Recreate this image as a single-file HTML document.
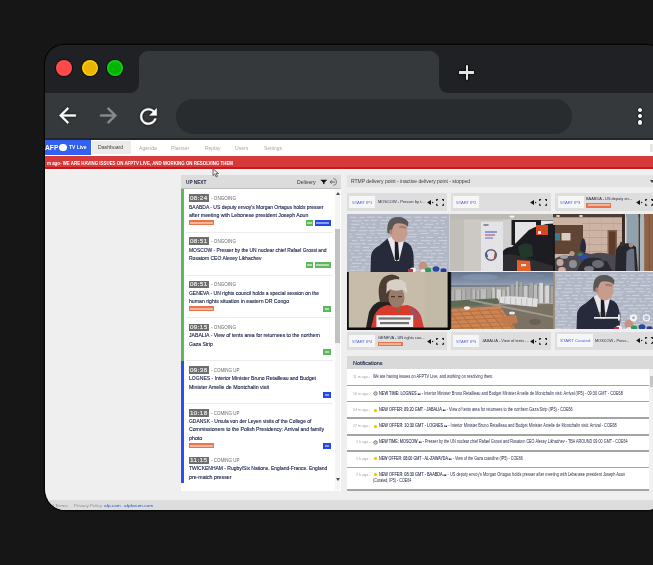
<!DOCTYPE html>
<html><head><meta charset="utf-8">
<style>
*{box-sizing:border-box;margin:0;padding:0}
html,body{width:653px;height:565px;overflow:hidden;background:#161616;font-family:"Liberation Sans",sans-serif}
.a{position:absolute}
#frame{left:45px;top:45px;width:621px;height:465px;border-radius:19px 19px 19px 20.5px;background:#202124;overflow:hidden;box-shadow:0 0 0 1.2px #060606}
.dot{width:16px;height:16px;border-radius:50%;box-shadow:0 0 0 1.2px #10131a}
#tab{left:93.5px;top:6px;width:300.5px;height:50px;background:#35393b;border-radius:9px 9px 0 0}
.inv{width:9px;height:9px;top:39px;background:#35393b}
.inv i{position:absolute;left:0;top:0;width:9px;height:9px;background:#202124}
#toolbar{left:0;top:48px;width:660px;height:47px;background:#35393b;border-bottom:2px solid #232628}
#omni{left:130.6px;top:54px;width:396.5px;height:34.5px;border-radius:17.25px;background:#292c2e}
#page{left:0;top:94.5px;width:660px;height:371px;background:#efefef;overflow:hidden}
.t{position:absolute;white-space:nowrap;line-height:1}
</style></head><body>
<div id="frame" class="a">
  <div class="a dot" style="left:10.8px;top:15px;background:radial-gradient(circle closest-side,#ff4848 70%,#ff5050 100%)"></div>
  <div class="a dot" style="left:36.5px;top:15px;background:radial-gradient(circle closest-side,#e8b600 68%,#ffd000 92%)"></div>
  <div class="a dot" style="left:61.5px;top:15px;background:radial-gradient(circle closest-side,#00b600 68%,#14d414 92%)"></div>
  <div id="tab" class="a"></div>
  <div class="a inv" style="left:84.5px"><i style="border-bottom-right-radius:9px"></i></div>
  <div class="a inv" style="left:394px"><i style="border-bottom-left-radius:9px"></i></div>
  <div id="toolbar" class="a"></div>
  <!-- plus -->
  <div class="a" style="left:413.9px;top:26.3px;width:15.6px;height:2.3px;border-radius:1.2px;background:#e4e4e4;box-shadow:0 0 1.6px 0.6px #0a0a0a"></div>
  <div class="a" style="left:420.75px;top:19.7px;width:2.3px;height:15.1px;border-radius:1.2px;background:#e4e4e4;box-shadow:0 0 1.6px 0.6px #0a0a0a"></div>
  <div class="a" style="left:413.9px;top:26.3px;width:15.6px;height:2.3px;border-radius:1.2px;background:#e4e4e4"></div>
  <!-- back -->
  <svg class="a" style="left:10.4px;top:58.2px;filter:drop-shadow(0 0 0.9px #000)" width="25" height="25" viewBox="0 0 24 24"><path d="M20 11H7.83l5.59-5.59L12 4l-8 8 8 8 1.41-1.41L7.83 13H20v-2z" fill="#fff" stroke="#fff" stroke-width="0.35"/></svg>
  <svg class="a" style="left:50.8px;top:58.2px" width="25" height="25" viewBox="0 0 24 24"><path d="M12 4l-1.41 1.41L16.17 11H4v2h12.17l-5.58 5.59L12 20l8-8z" fill="#8a8c8e" stroke="#8a8c8e" stroke-width="0.35"/></svg>
  <svg class="a" style="left:91.3px;top:58.9px;filter:drop-shadow(0 0 0.9px #000)" width="24.9" height="24.9" viewBox="0 0 24 24"><path d="M17.65 6.35C16.2 4.9 14.21 4 12 4c-4.42 0-7.99 3.58-7.99 8s3.57 8 7.99 8c3.730 0 6.84-2.55 7.73-6h-2.08c-.82 2.33-3.04 4-5.65 4-3.31 0-6-2.69-6-6s2.69-6 6-6c1.66 0 3.140.69 4.22 1.78L13 11h7V4l-2.35 2.35z" fill="#fff" stroke="#fff" stroke-width="0.3"/></svg>
  <div id="omni" class="a"></div>
  <div class="a" style="left:592.5px;top:62.5px;width:4.6px;height:4.6px;border-radius:50%;background:#fff;box-shadow:0 0 1.2px 0.4px #000"></div>
  <div class="a" style="left:592.5px;top:68.8px;width:4.6px;height:4.6px;border-radius:50%;background:#fff;box-shadow:0 0 1.2px 0.4px #000"></div>
  <div class="a" style="left:592.5px;top:75.1px;width:4.6px;height:4.6px;border-radius:50%;background:#fff;box-shadow:0 0 1.2px 0.4px #000"></div>
  <div id="page" class="a"><div class="a" style="left:-45px;top:-139.5px;width:700px;height:520px"><div class="a" style="left:45px;top:139.5px;width:620px;height:16.1px;background:#fff;"></div><div class="a" style="left:45px;top:139.9px;width:45.7px;height:15.4px;background:#3260f0;"></div><div class="t" style="left:44.6px;top:144.5px;font-size:6.9px;color:#fff;font-weight:bold;--w:13.4;transform:scaleX(0.971);transform-origin:0 0;">AFP</div><div class="a" style="left:59.2px;top:143.6px;width:7.7px;height:7.7px;background:#fff;border-radius:50%"></div><div class="t" style="left:69.3px;top:145.2px;font-size:5.8px;color:#fff;font-weight:bold;--w:17.6;transform:scaleX(0.853);transform-origin:0 0;">TV Live</div><div class="a" style="left:91.5px;top:141.4px;width:39.8px;height:12.6px;background:#ebebeb;"></div><div class="t" style="left:98.4px;top:145.4px;font-size:5.6px;color:#3c3c3c;--w:25.2;transform:scaleX(0.921);transform-origin:0 0;">Dashboard</div><div class="t" style="left:138.6px;top:145.6px;font-size:5.2px;color:#a8a8a8;--w:17.9;transform:scaleX(1.001);transform-origin:0 0;">Agenda</div><div class="t" style="left:171px;top:145.6px;font-size:5.2px;color:#a8a8a8;--w:18.3;transform:scaleX(1.023);transform-origin:0 0;">Planner</div><div class="t" style="left:204.8px;top:145.6px;font-size:5.2px;color:#a8a8a8;--w:15.4;transform:scaleX(0.953);transform-origin:0 0;">Replay</div><div class="t" style="left:234.9px;top:145.6px;font-size:5.2px;color:#a8a8a8;--w:13.2;transform:scaleX(0.974);transform-origin:0 0;">Users</div><div class="t" style="left:263.6px;top:145.6px;font-size:5.2px;color:#a8a8a8;--w:17.9;transform:scaleX(0.955);transform-origin:0 0;">Settings</div><div class="a" style="left:650px;top:144px;width:4px;height:8px;background:#e6e6e6;"></div><div class="a" style="left:45px;top:155.6px;width:620px;height:13.6px;background:#d63a3a;border-bottom:2.3px solid #cf1616"></div><div class="a" style="left:45px;top:169.2px;width:620px;height:2.3px;background:#f8f8f8;"></div><div class="t" style="left:47px;top:160.8px;font-size:5.2px;color:#fff;font-weight:bold;--w:186;transform:scaleX(0.849);transform-origin:0 0;">m ago- WE ARE HAVING ISSUES ON AFPTV LIVE, AND WORKING ON RESOLVING THEM</div><div class="a" style="left:45px;top:499.5px;width:620px;height:11px;background:#dcdcdc;"></div><div class="t" style="left:51px;top:504.4px;font-size:4.4px;color:#8f8f8f;--w:17;transform:scaleX(1.093);transform-origin:0 0;">d Terms</div><div class="t" style="left:73.7px;top:504.4px;font-size:4.4px;color:#8f8f8f;--w:27.9;transform:scaleX(1.021);transform-origin:0 0;">Privacy Policy</div><div class="t" style="left:104.2px;top:504.4px;font-size:4.4px;color:#2a52d8;--w:16.8;transform:scaleX(1.075);transform-origin:0 0;">afp.com</div><div class="t" style="left:123.75px;top:504.4px;font-size:4.4px;color:#2a52d8;--w:29.2;transform:scaleX(1.088);transform-origin:0 0;">afpforum.com</div><div class="a" style="left:180.7px;top:175px;width:160px;height:14.3px;background:#dcdcdc;border-bottom:1.5px solid #bdbdbd"></div><div class="t" style="left:185.8px;top:179.9px;font-size:5.2px;color:#232a44;font-weight:bold;--w:20.3;transform:scaleX(0.907);transform-origin:0 0;">UP NEXT</div><div class="t" style="left:297px;top:180.6px;font-size:4.8px;color:#333;--w:18.5;transform:scaleX(1.068);transform-origin:0 0;">Delivery</div><svg class="a" style="left:319.5px;top:178.5px" width="8" height="6" viewBox="0 0 8 6"><path d="M0.3 0.7h7L4.5 3.6V5.3L3.1 4.8V3.6z" fill="#111"/></svg><svg class="a" style="left:328.5px;top:177.5px" width="9" height="8" viewBox="0 0 9 8"><path d="M4.2 0.6A3.4 3.4 0 1 1 4.2 7.4" stroke="#6a6a6a" stroke-width="0.8" fill="none"/><path d="M6.2 4H1.2M2.8 2.4L1.2 4 2.8 5.6" stroke="#444" stroke-width="0.8" fill="none"/></svg><div class="a" style="left:180.7px;top:189.3px;width:160px;height:301.8px;background:#fff;"></div><div class="a" style="left:334.9px;top:189.3px;width:5.3px;height:300.7px;background:#f5f5f5;"></div><div class="a" style="left:335.3px;top:229px;width:4.5px;height:114px;background:#c1c1c1;"></div><svg class="a" style="left:335.5px;top:191.5px" width="4" height="3" viewBox="0 0 4 3"><path d="M0 3L2 0 4 3z" fill="#505050"/></svg><svg class="a" style="left:335.5px;top:478px" width="4" height="3" viewBox="0 0 4 3"><path d="M0 0L2 3 4 0z" fill="#505050"/></svg><div class="a" style="left:180.8px;top:189.3px;width:3.7px;height:171.4px;background:#5cb85c;"></div><div class="a" style="left:180.8px;top:360.7px;width:3.7px;height:122px;background:#2a4ef2;"></div><div class="a" style="left:186px;top:231.5px;width:147px;height:1px;background:#ececec;"></div><div class="a" style="left:186px;top:274.7px;width:147px;height:1px;background:#ececec;"></div><div class="a" style="left:186px;top:317.1px;width:147px;height:1px;background:#ececec;"></div><div class="a" style="left:186px;top:360.1px;width:147px;height:1px;background:#ececec;"></div><div class="a" style="left:186px;top:402.5px;width:147px;height:1px;background:#ececec;"></div><div class="a" style="left:188.5px;top:194.1px;width:20.6px;height:7.9px;background:#6e6e6e;"></div><div class="t" style="left:190px;top:195.7px;font-size:5.6px;color:#ececec;--w:17.5;transform:scaleX(1.129);transform-origin:0 0;letter-spacing:0.3px;-webkit-text-stroke:0.15px #ececec">08:24</div><div class="t" style="left:210.5px;top:196.0px;font-size:5.2px;color:#666;--w:25;transform:scaleX(0.885);transform-origin:0 0;">- ONGOING</div><div class="t" style="left:188.5px;top:204.7px;font-size:5.0px;color:#18204a;--w:134.4;transform:scaleX(0.996);transform-origin:0 0;-webkit-text-stroke:0.12px #18204a">BAABDA - US deputy envoy's Morgan Ortagus holds presser</div><div class="t" style="left:188.5px;top:212.7px;font-size:5.0px;color:#18204a;--w:119.3;transform:scaleX(1.037);transform-origin:0 0;-webkit-text-stroke:0.12px #18204a">after meeting with Lebonese president Joseph Aoun</div><div class="a" style="left:188.5px;top:220.4px;width:25.5px;height:5px;background:#e8744c;"></div><div class="a" style="left:190px;top:221.9px;width:22.5px;height:2px;background:#f4b59a;"></div><div class="a" style="left:314.7px;top:220.2px;width:16px;height:5.4px;background:#2448e6;"></div><div class="a" style="left:316.2px;top:221.8px;width:13px;height:2.2px;background:#8da0f4;"></div><div class="a" style="left:305.59999999999997px;top:220.2px;width:7.5px;height:5.4px;background:#5cb85c;"></div><div class="a" style="left:307.09999999999997px;top:221.8px;width:4.5px;height:2.2px;background:#b5dcb5;"></div><div class="a" style="left:188.5px;top:237.4px;width:20.6px;height:7.9px;background:#6e6e6e;"></div><div class="t" style="left:190px;top:239.0px;font-size:5.6px;color:#ececec;--w:17.5;transform:scaleX(1.129);transform-origin:0 0;letter-spacing:0.3px;-webkit-text-stroke:0.15px #ececec">08:51</div><div class="t" style="left:210.5px;top:239.3px;font-size:5.2px;color:#666;--w:25;transform:scaleX(0.885);transform-origin:0 0;">- ONGOING</div><div class="t" style="left:188.5px;top:247.7px;font-size:5.0px;color:#18204a;--w:137.5;transform:scaleX(0.982);transform-origin:0 0;-webkit-text-stroke:0.12px #18204a">MOSCOW - Presser by the UN nuclear chief Rafael Grossi and</div><div class="t" style="left:188.5px;top:255.7px;font-size:5.0px;color:#18204a;--w:72.5;transform:scaleX(1.003);transform-origin:0 0;-webkit-text-stroke:0.12px #18204a">Rosatom CEO Alexey Likhachev</div><div class="a" style="left:314.7px;top:262.2px;width:16px;height:5.4px;background:#5cb85c;"></div><div class="a" style="left:316.2px;top:263.8px;width:13px;height:2.2px;background:#b5dcb5;"></div><div class="a" style="left:305.59999999999997px;top:262.2px;width:7.5px;height:5.4px;background:#5cb85c;"></div><div class="a" style="left:307.09999999999997px;top:263.8px;width:4.5px;height:2.2px;background:#b5dcb5;"></div><div class="a" style="left:188.5px;top:280.5px;width:20.6px;height:7.9px;background:#6e6e6e;"></div><div class="t" style="left:190px;top:282.1px;font-size:5.6px;color:#ececec;--w:17.5;transform:scaleX(1.129);transform-origin:0 0;letter-spacing:0.3px;-webkit-text-stroke:0.15px #ececec">08:51</div><div class="t" style="left:210.5px;top:282.4px;font-size:5.2px;color:#666;--w:25;transform:scaleX(0.885);transform-origin:0 0;">- ONGOING</div><div class="t" style="left:188.5px;top:290.7px;font-size:5.0px;color:#18204a;--w:130;transform:scaleX(0.996);transform-origin:0 0;-webkit-text-stroke:0.12px #18204a">GENEVA - UN rights council holds a special session on the</div><div class="t" style="left:188.5px;top:298.7px;font-size:5.0px;color:#18204a;--w:100;transform:scaleX(1.031);transform-origin:0 0;-webkit-text-stroke:0.12px #18204a">human rights situation in eastern DR Congo</div><div class="a" style="left:188.5px;top:306.4px;width:25.5px;height:5px;background:#e8744c;"></div><div class="a" style="left:190px;top:307.9px;width:22.5px;height:2px;background:#f4b59a;"></div><div class="a" style="left:323.2px;top:306.2px;width:7.5px;height:5.4px;background:#5cb85c;"></div><div class="a" style="left:324.7px;top:307.8px;width:4.5px;height:2.2px;background:#b5dcb5;"></div><div class="a" style="left:188.5px;top:323.5px;width:20.6px;height:7.9px;background:#6e6e6e;"></div><div class="t" style="left:190px;top:325.1px;font-size:5.6px;color:#ececec;--w:17.5;transform:scaleX(1.129);transform-origin:0 0;letter-spacing:0.3px;-webkit-text-stroke:0.15px #ececec">09:15</div><div class="t" style="left:210.5px;top:325.4px;font-size:5.2px;color:#666;--w:25;transform:scaleX(0.885);transform-origin:0 0;">- ONGOING</div><div class="t" style="left:188.5px;top:333.2px;font-size:5.0px;color:#18204a;--w:131;transform:scaleX(1.025);transform-origin:0 0;-webkit-text-stroke:0.12px #18204a">JABALIA - View of tents area for returnees to the northern</div><div class="t" style="left:188.5px;top:341.7px;font-size:5.0px;color:#18204a;--w:23.7;transform:scaleX(1.003);transform-origin:0 0;-webkit-text-stroke:0.12px #18204a">Gaza Strip</div><div class="a" style="left:323.2px;top:349.2px;width:7.5px;height:5.4px;background:#5cb85c;"></div><div class="a" style="left:324.7px;top:350.8px;width:4.5px;height:2.2px;background:#b5dcb5;"></div><div class="a" style="left:188.5px;top:366.2px;width:20.6px;height:7.9px;background:#6e6e6e;"></div><div class="t" style="left:190px;top:367.8px;font-size:5.6px;color:#ececec;--w:17.5;transform:scaleX(1.129);transform-origin:0 0;letter-spacing:0.3px;-webkit-text-stroke:0.15px #ececec">09:38</div><div class="t" style="left:210.5px;top:368.09999999999997px;font-size:5.2px;color:#666;--w:28.5;transform:scaleX(0.860);transform-origin:0 0;">- COMING UP</div><div class="t" style="left:188.5px;top:376.4px;font-size:5.0px;color:#18204a;--w:127;transform:scaleX(1.015);transform-origin:0 0;-webkit-text-stroke:0.12px #18204a">LOGNES - Interior Minister Bruno Retailleau and Budget</div><div class="t" style="left:188.5px;top:384.7px;font-size:5.0px;color:#18204a;--w:80;transform:scaleX(1.047);transform-origin:0 0;-webkit-text-stroke:0.12px #18204a">Minister Amelie de Montchalin visit</div><div class="a" style="left:323.2px;top:392.2px;width:7.5px;height:5.4px;background:#2448e6;"></div><div class="a" style="left:324.7px;top:393.8px;width:4.5px;height:2.2px;background:#8da0f4;"></div><div class="a" style="left:188.5px;top:409.2px;width:20.6px;height:7.9px;background:#6e6e6e;"></div><div class="t" style="left:190px;top:410.8px;font-size:5.6px;color:#ececec;--w:17.5;transform:scaleX(1.129);transform-origin:0 0;letter-spacing:0.3px;-webkit-text-stroke:0.15px #ececec">10:18</div><div class="t" style="left:210.5px;top:411.09999999999997px;font-size:5.2px;color:#666;--w:28.5;transform:scaleX(0.860);transform-origin:0 0;">- COMING UP</div><div class="t" style="left:188.5px;top:418.7px;font-size:5.0px;color:#18204a;--w:122.4;transform:scaleX(0.992);transform-origin:0 0;-webkit-text-stroke:0.12px #18204a">GDANSK - Ursula von der Leyen visits of the College of</div><div class="t" style="left:188.5px;top:427.2px;font-size:5.0px;color:#18204a;--w:135;transform:scaleX(1.036);transform-origin:0 0;-webkit-text-stroke:0.12px #18204a">Commissioners to the Polish Presidency: Arrival and family</div><div class="t" style="left:188.5px;top:435.5px;font-size:5.0px;color:#18204a;--w:13.3;transform:scaleX(1.063);transform-origin:0 0;-webkit-text-stroke:0.12px #18204a">photo</div><div class="a" style="left:188.5px;top:443.4px;width:25.5px;height:5px;background:#e8744c;"></div><div class="a" style="left:190px;top:444.9px;width:22.5px;height:2px;background:#f4b59a;"></div><div class="a" style="left:323.2px;top:443.2px;width:7.5px;height:5.4px;background:#2448e6;"></div><div class="a" style="left:324.7px;top:444.8px;width:4.5px;height:2.2px;background:#8da0f4;"></div><div class="a" style="left:188.5px;top:456.5px;width:20.6px;height:7.9px;background:#6e6e6e;"></div><div class="t" style="left:190px;top:458.1px;font-size:5.6px;color:#ececec;--w:17.5;transform:scaleX(1.159);transform-origin:0 0;letter-spacing:0.3px;-webkit-text-stroke:0.15px #ececec">11:15</div><div class="t" style="left:210.5px;top:458.4px;font-size:5.2px;color:#666;--w:28.5;transform:scaleX(0.860);transform-origin:0 0;">- COMING UP</div><div class="t" style="left:188.5px;top:466.3px;font-size:5.0px;color:#18204a;--w:138.3;transform:scaleX(0.993);transform-origin:0 0;-webkit-text-stroke:0.12px #18204a">TWICKENHAM - Rugby/Six Nations. England-France. England</div><div class="t" style="left:188.5px;top:474.7px;font-size:5.0px;color:#18204a;--w:42.4;transform:scaleX(1.045);transform-origin:0 0;-webkit-text-stroke:0.12px #18204a">pre-match presser</div><div class="a" style="left:346.8px;top:174.8px;width:320px;height:12.2px;background:#e3e3e3;"></div><div class="t" style="left:350.5px;top:180.0px;font-size:4.6px;color:#3a3a3a;--w:119;transform:scaleX(1.086);transform-origin:0 0;">RTMP delivery point - inactive delivery point - stopped</div><svg class="a" style="left:649.5px;top:180px" width="4" height="3" viewBox="0 0 4 3"><path d="M0 0L2 3 4 0z" fill="#444"/></svg><div class="a" style="left:346.8px;top:193.4px;width:100.5px;height:17.9px;background:#dedede;"></div><div class="a" style="left:349.3px;top:195.8px;width:26.2px;height:12.6px;background:#f6f6f6;"></div><div class="t" style="left:352.0px;top:200.70000000000002px;font-size:4.4px;color:#5064d8;--w:20.4;transform:scaleX(0.939);transform-origin:0 0;">START IP1</div><div class="t" style="left:377.8px;top:200.4px;font-size:4.4px;color:#262c48;--w:46.6;transform:scaleX(0.901);transform-origin:0 0;">MOSCOW - Presser by t...</div><svg class="a" style="left:426.8px;top:198.70000000000002px" width="18" height="8" viewBox="0 0 18 8"><path d="M0.1 3.4L4 0.9V5.9z" fill="#151515"/><circle cx="5.6" cy="3.4" r="0.75" fill="#222"/><path d="M9.6 1.9V0.6h1.5M15 0.6h1.5v1.3M9.6 4.8v1.4h1.5M15 6.2h1.5V4.8" stroke="#222" stroke-width="1.05" fill="none"/></svg><div class="a" style="left:450.7px;top:193.4px;width:99.90000000000003px;height:17.9px;background:#dedede;"></div><div class="a" style="left:453.2px;top:195.8px;width:26.2px;height:12.6px;background:#f6f6f6;"></div><div class="t" style="left:455.9px;top:200.70000000000002px;font-size:4.4px;color:#5064d8;--w:20.4;transform:scaleX(0.939);transform-origin:0 0;">START IP2</div><div class="t" style="left:481.7px;top:200.4px;font-size:4.4px;color:#262c48;--w:46.6;transform:scaleX(1.000);transform-origin:0 0;"></div><svg class="a" style="left:530.1px;top:198.70000000000002px" width="18" height="8" viewBox="0 0 18 8"><path d="M0.1 3.4L4 0.9V5.9z" fill="#151515"/><circle cx="5.6" cy="3.4" r="0.75" fill="#222"/><path d="M9.6 1.9V0.6h1.5M15 0.6h1.5v1.3M9.6 4.8v1.4h1.5M15 6.2h1.5V4.8" stroke="#222" stroke-width="1.05" fill="none"/></svg><div class="a" style="left:555px;top:193.4px;width:105px;height:17.9px;background:#dedede;"></div><div class="a" style="left:557.5px;top:195.8px;width:26.2px;height:12.6px;background:#f6f6f6;"></div><div class="t" style="left:560.2px;top:200.70000000000002px;font-size:4.4px;color:#5064d8;--w:20.4;transform:scaleX(0.939);transform-origin:0 0;">START IP3</div><div class="t" style="left:586.0px;top:197.0px;font-size:4.4px;color:#262c48;--w:46;transform:scaleX(0.889);transform-origin:0 0;">BAABDA - US deputy en...</div><div class="a" style="left:586.0px;top:203.0px;width:25px;height:4.6px;background:#e8744c;"></div><div class="a" style="left:587.5px;top:204.3px;width:22px;height:2px;background:#f3b39a;"></div><svg class="a" style="left:636px;top:198.70000000000002px" width="18" height="8" viewBox="0 0 18 8"><path d="M0.1 3.4L4 0.9V5.9z" fill="#151515"/><circle cx="5.6" cy="3.4" r="0.75" fill="#222"/><path d="M9.6 1.9V0.6h1.5M15 0.6h1.5v1.3M9.6 4.8v1.4h1.5M15 6.2h1.5V4.8" stroke="#222" stroke-width="1.05" fill="none"/></svg><div class="a" style="left:346.8px;top:332.3px;width:100.5px;height:17.9px;background:#dedede;"></div><div class="a" style="left:349.3px;top:334.7px;width:26.2px;height:12.6px;background:#f6f6f6;"></div><div class="t" style="left:352.0px;top:339.6px;font-size:4.4px;color:#5064d8;--w:20.4;transform:scaleX(0.939);transform-origin:0 0;">START IP4</div><div class="t" style="left:377.8px;top:335.90000000000003px;font-size:4.4px;color:#262c48;--w:46.6;transform:scaleX(0.898);transform-origin:0 0;">GENEVA - UN rights cou...</div><div class="a" style="left:377.8px;top:341.90000000000003px;width:25px;height:4.6px;background:#e8744c;"></div><div class="a" style="left:379.3px;top:343.2px;width:22px;height:2px;background:#f3b39a;"></div><svg class="a" style="left:426.8px;top:337.6px" width="18" height="8" viewBox="0 0 18 8"><path d="M0.1 3.4L4 0.9V5.9z" fill="#151515"/><circle cx="5.6" cy="3.4" r="0.75" fill="#222"/><path d="M9.6 1.9V0.6h1.5M15 0.6h1.5v1.3M9.6 4.8v1.4h1.5M15 6.2h1.5V4.8" stroke="#222" stroke-width="1.05" fill="none"/></svg><div class="a" style="left:450.7px;top:332.3px;width:99.90000000000003px;height:17.9px;background:#dedede;"></div><div class="a" style="left:453.2px;top:334.7px;width:26.2px;height:12.6px;background:#f6f6f6;"></div><div class="t" style="left:455.9px;top:339.6px;font-size:4.4px;color:#5064d8;--w:20.4;transform:scaleX(0.939);transform-origin:0 0;">START IP5</div><div class="t" style="left:481.7px;top:339.3px;font-size:4.4px;color:#262c48;--w:46.6;transform:scaleX(0.911);transform-origin:0 0;">JABALIA - View of tents ...</div><svg class="a" style="left:530.1px;top:337.6px" width="18" height="8" viewBox="0 0 18 8"><path d="M0.1 3.4L4 0.9V5.9z" fill="#151515"/><circle cx="5.6" cy="3.4" r="0.75" fill="#222"/><path d="M9.6 1.9V0.6h1.5M15 0.6h1.5v1.3M9.6 4.8v1.4h1.5M15 6.2h1.5V4.8" stroke="#222" stroke-width="1.05" fill="none"/></svg><div class="a" style="left:554.9px;top:332.0px;width:105.10000000000002px;height:17.9px;background:#dedede;"></div><div class="a" style="left:557.4px;top:334.4px;width:35.5px;height:12.6px;background:#f6f6f6;"></div><div class="t" style="left:560.1px;top:339.3px;font-size:4.4px;color:#5064d8;--w:30.3;transform:scaleX(0.985);transform-origin:0 0;">START Curated</div><div class="t" style="left:595.1999999999999px;top:339.0px;font-size:4.4px;color:#262c48;--w:34.4;transform:scaleX(0.870);transform-origin:0 0;">MOSCOW - Press...</div><svg class="a" style="left:636px;top:337.3px" width="18" height="8" viewBox="0 0 18 8"><path d="M0.1 3.4L4 0.9V5.9z" fill="#151515"/><circle cx="5.6" cy="3.4" r="0.75" fill="#222"/><path d="M9.6 1.9V0.6h1.5M15 0.6h1.5v1.3M9.6 4.8v1.4h1.5M15 6.2h1.5V4.8" stroke="#222" stroke-width="1.05" fill="none"/></svg><svg class="a" style="left:347px;top:213.6px" width="103" height="58" viewBox="0 0 103 58" preserveAspectRatio="none"><defs><filter id="b347213" x="-5%" y="-5%" width="110%" height="110%"><feGaussianBlur stdDeviation="0.4"/></filter></defs><g filter="url(#b347213)"><rect x="0" y="0" width="103" height="58" fill="#b1b7c6"/><rect x="3.1" y="2.8" width="6.3" height="1.1" fill="#dfe2ea" opacity="0.6"/><rect x="12.2" y="3.0" width="5.7" height="1.1" fill="#dfe2ea" opacity="0.6"/><rect x="20.2" y="2.5" width="7.7" height="1.1" fill="#dfe2ea" opacity="0.6"/><rect x="30.3" y="2.6" width="5.0" height="1.1" fill="#dfe2ea" opacity="0.6"/><rect x="39.1" y="3.1" width="4.8" height="1.1" fill="#dfe2ea" opacity="0.6"/><rect x="48.2" y="3.2" width="4.3" height="1.1" fill="#dfe2ea" opacity="0.6"/><rect x="56.4" y="2.5" width="8.0" height="1.1" fill="#dfe2ea" opacity="0.6"/><rect x="67.3" y="2.7" width="7.6" height="1.1" fill="#dfe2ea" opacity="0.6"/><rect x="77.1" y="2.7" width="4.8" height="1.1" fill="#dfe2ea" opacity="0.6"/><rect x="85.8" y="2.8" width="5.1" height="1.1" fill="#dfe2ea" opacity="0.6"/><rect x="94.3" y="2.7" width="5.7" height="1.1" fill="#dfe2ea" opacity="0.6"/><rect x="4.9" y="6.4" width="9.5" height="1.1" fill="#dfe2ea" opacity="0.6"/><rect x="17.5" y="5.9" width="4.1" height="1.1" fill="#dfe2ea" opacity="0.6"/><rect x="24.0" y="5.9" width="6.1" height="1.1" fill="#dfe2ea" opacity="0.6"/><rect x="33.8" y="5.8" width="8.6" height="1.1" fill="#dfe2ea" opacity="0.6"/><rect x="46.3" y="6.5" width="6.4" height="1.1" fill="#dfe2ea" opacity="0.6"/><rect x="55.7" y="6.2" width="9.2" height="1.1" fill="#dfe2ea" opacity="0.6"/><rect x="68.2" y="5.8" width="6.5" height="1.1" fill="#dfe2ea" opacity="0.6"/><rect x="76.6" y="6.1" width="4.1" height="1.1" fill="#dfe2ea" opacity="0.6"/><rect x="83.3" y="6.3" width="6.9" height="1.1" fill="#dfe2ea" opacity="0.6"/><rect x="92.9" y="6.2" width="4.9" height="1.1" fill="#dfe2ea" opacity="0.6"/><rect x="4.3" y="9.8" width="7.9" height="1.1" fill="#dfe2ea" opacity="0.6"/><rect x="14.4" y="9.2" width="2.9" height="1.1" fill="#dfe2ea" opacity="0.6"/><rect x="19.2" y="9.6" width="2.1" height="1.1" fill="#dfe2ea" opacity="0.6"/><rect x="25.5" y="9.6" width="3.0" height="1.1" fill="#dfe2ea" opacity="0.6"/><rect x="32.9" y="9.2" width="8.9" height="1.1" fill="#dfe2ea" opacity="0.6"/><rect x="45.2" y="9.2" width="4.3" height="1.1" fill="#dfe2ea" opacity="0.6"/><rect x="51.0" y="9.8" width="6.7" height="1.1" fill="#dfe2ea" opacity="0.6"/><rect x="59.6" y="9.4" width="3.3" height="1.1" fill="#dfe2ea" opacity="0.6"/><rect x="64.5" y="9.7" width="6.2" height="1.1" fill="#dfe2ea" opacity="0.6"/><rect x="73.6" y="9.1" width="2.4" height="1.1" fill="#dfe2ea" opacity="0.6"/><rect x="78.0" y="9.8" width="8.0" height="1.1" fill="#dfe2ea" opacity="0.6"/><rect x="89.0" y="9.3" width="2.9" height="1.1" fill="#dfe2ea" opacity="0.6"/><rect x="94.7" y="9.2" width="3.0" height="1.1" fill="#dfe2ea" opacity="0.6"/><rect x="4.5" y="13.1" width="4.1" height="1.1" fill="#dfe2ea" opacity="0.6"/><rect x="12.8" y="12.6" width="5.9" height="1.1" fill="#dfe2ea" opacity="0.6"/><rect x="20.7" y="13.1" width="8.0" height="1.1" fill="#dfe2ea" opacity="0.6"/><rect x="32.8" y="12.7" width="3.9" height="1.1" fill="#dfe2ea" opacity="0.6"/><rect x="38.3" y="12.6" width="4.7" height="1.1" fill="#dfe2ea" opacity="0.6"/><rect x="44.9" y="13.2" width="2.7" height="1.1" fill="#dfe2ea" opacity="0.6"/><rect x="50.0" y="12.8" width="6.5" height="1.1" fill="#dfe2ea" opacity="0.6"/><rect x="59.4" y="12.8" width="7.3" height="1.1" fill="#dfe2ea" opacity="0.6"/><rect x="69.7" y="12.9" width="2.7" height="1.1" fill="#dfe2ea" opacity="0.6"/><rect x="75.9" y="12.7" width="8.5" height="1.1" fill="#dfe2ea" opacity="0.6"/><rect x="87.3" y="13.0" width="9.3" height="1.1" fill="#dfe2ea" opacity="0.6"/><rect x="98.2" y="12.5" width="1.8" height="1.1" fill="#dfe2ea" opacity="0.6"/><rect x="3.2" y="15.9" width="5.5" height="1.1" fill="#dfe2ea" opacity="0.6"/><rect x="11.6" y="16.2" width="8.5" height="1.1" fill="#dfe2ea" opacity="0.6"/><rect x="22.2" y="16.2" width="5.6" height="1.1" fill="#dfe2ea" opacity="0.6"/><rect x="29.4" y="15.7" width="10.1" height="1.1" fill="#dfe2ea" opacity="0.6"/><rect x="42.9" y="16.5" width="3.3" height="1.1" fill="#dfe2ea" opacity="0.6"/><rect x="49.8" y="16.1" width="4.0" height="1.1" fill="#dfe2ea" opacity="0.6"/><rect x="57.9" y="16.2" width="9.7" height="1.1" fill="#dfe2ea" opacity="0.6"/><rect x="71.0" y="16.4" width="8.7" height="1.1" fill="#dfe2ea" opacity="0.6"/><rect x="82.7" y="16.3" width="7.5" height="1.1" fill="#dfe2ea" opacity="0.6"/><rect x="93.3" y="16.2" width="4.0" height="1.1" fill="#dfe2ea" opacity="0.6"/><rect x="99.8" y="16.3" width="0.2" height="1.1" fill="#dfe2ea" opacity="0.6"/><rect x="2.3" y="19.7" width="2.2" height="1.1" fill="#dfe2ea" opacity="0.6"/><rect x="8.2" y="19.7" width="11.0" height="1.1" fill="#dfe2ea" opacity="0.6"/><rect x="23.6" y="19.1" width="3.4" height="1.1" fill="#dfe2ea" opacity="0.6"/><rect x="30.3" y="19.1" width="8.8" height="1.1" fill="#dfe2ea" opacity="0.6"/><rect x="43.5" y="19.2" width="4.1" height="1.1" fill="#dfe2ea" opacity="0.6"/><rect x="50.3" y="19.1" width="3.6" height="1.1" fill="#dfe2ea" opacity="0.6"/><rect x="55.7" y="19.1" width="2.3" height="1.1" fill="#dfe2ea" opacity="0.6"/><rect x="61.5" y="19.6" width="9.0" height="1.1" fill="#dfe2ea" opacity="0.6"/><rect x="73.3" y="19.1" width="8.8" height="1.1" fill="#dfe2ea" opacity="0.6"/><rect x="86.2" y="19.1" width="5.7" height="1.1" fill="#dfe2ea" opacity="0.6"/><rect x="94.5" y="19.6" width="3.7" height="1.1" fill="#dfe2ea" opacity="0.6"/><rect x="2.1" y="22.4" width="3.7" height="1.1" fill="#dfe2ea" opacity="0.6"/><rect x="10.1" y="22.9" width="5.7" height="1.1" fill="#dfe2ea" opacity="0.6"/><rect x="19.1" y="22.9" width="5.7" height="1.1" fill="#dfe2ea" opacity="0.6"/><rect x="28.0" y="23.1" width="2.4" height="1.1" fill="#dfe2ea" opacity="0.6"/><rect x="32.9" y="22.6" width="7.9" height="1.1" fill="#dfe2ea" opacity="0.6"/><rect x="45.2" y="22.3" width="3.5" height="1.1" fill="#dfe2ea" opacity="0.6"/><rect x="50.3" y="23.0" width="5.6" height="1.1" fill="#dfe2ea" opacity="0.6"/><rect x="58.8" y="22.4" width="10.4" height="1.1" fill="#dfe2ea" opacity="0.6"/><rect x="73.5" y="23.0" width="3.5" height="1.1" fill="#dfe2ea" opacity="0.6"/><rect x="79.1" y="22.8" width="7.2" height="1.1" fill="#dfe2ea" opacity="0.6"/><rect x="90.8" y="23.0" width="5.7" height="1.1" fill="#dfe2ea" opacity="0.6"/><rect x="98.1" y="22.7" width="1.9" height="1.1" fill="#dfe2ea" opacity="0.6"/><rect x="4.9" y="26.1" width="4.8" height="1.1" fill="#dfe2ea" opacity="0.6"/><rect x="13.0" y="25.7" width="4.7" height="1.1" fill="#dfe2ea" opacity="0.6"/><rect x="20.5" y="26.1" width="4.5" height="1.1" fill="#dfe2ea" opacity="0.6"/><rect x="27.8" y="26.2" width="2.7" height="1.1" fill="#dfe2ea" opacity="0.6"/><rect x="34.8" y="25.8" width="7.6" height="1.1" fill="#dfe2ea" opacity="0.6"/><rect x="44.7" y="26.0" width="10.6" height="1.1" fill="#dfe2ea" opacity="0.6"/><rect x="59.0" y="26.3" width="2.7" height="1.1" fill="#dfe2ea" opacity="0.6"/><rect x="65.9" y="25.8" width="4.3" height="1.1" fill="#dfe2ea" opacity="0.6"/><rect x="73.7" y="26.2" width="10.6" height="1.1" fill="#dfe2ea" opacity="0.6"/><rect x="85.8" y="26.3" width="3.0" height="1.1" fill="#dfe2ea" opacity="0.6"/><rect x="91.6" y="26.0" width="8.4" height="1.1" fill="#dfe2ea" opacity="0.6"/><rect x="2.7" y="29.3" width="10.7" height="1.1" fill="#dfe2ea" opacity="0.6"/><rect x="14.8" y="29.0" width="3.8" height="1.1" fill="#dfe2ea" opacity="0.6"/><rect x="21.4" y="29.7" width="10.6" height="1.1" fill="#dfe2ea" opacity="0.6"/><rect x="36.3" y="29.5" width="5.7" height="1.1" fill="#dfe2ea" opacity="0.6"/><rect x="45.7" y="29.7" width="9.5" height="1.1" fill="#dfe2ea" opacity="0.6"/><rect x="59.2" y="29.2" width="8.9" height="1.1" fill="#dfe2ea" opacity="0.6"/><rect x="70.1" y="29.1" width="5.8" height="1.1" fill="#dfe2ea" opacity="0.6"/><rect x="79.6" y="29.1" width="3.4" height="1.1" fill="#dfe2ea" opacity="0.6"/><rect x="86.7" y="29.0" width="2.4" height="1.1" fill="#dfe2ea" opacity="0.6"/><rect x="90.6" y="29.0" width="2.2" height="1.1" fill="#dfe2ea" opacity="0.6"/><rect x="96.4" y="29.0" width="3.6" height="1.1" fill="#dfe2ea" opacity="0.6"/><rect x="3.1" y="32.3" width="2.0" height="1.1" fill="#dfe2ea" opacity="0.6"/><rect x="7.4" y="32.3" width="5.8" height="1.1" fill="#dfe2ea" opacity="0.6"/><rect x="15.9" y="32.9" width="6.4" height="1.1" fill="#dfe2ea" opacity="0.6"/><rect x="25.6" y="32.4" width="4.7" height="1.1" fill="#dfe2ea" opacity="0.6"/><rect x="32.4" y="33.0" width="5.5" height="1.1" fill="#dfe2ea" opacity="0.6"/><rect x="42.3" y="32.7" width="3.3" height="1.1" fill="#dfe2ea" opacity="0.6"/><rect x="49.4" y="32.8" width="10.3" height="1.1" fill="#dfe2ea" opacity="0.6"/><rect x="63.1" y="32.4" width="2.8" height="1.1" fill="#dfe2ea" opacity="0.6"/><rect x="70.3" y="32.9" width="10.2" height="1.1" fill="#dfe2ea" opacity="0.6"/><rect x="83.0" y="32.8" width="9.0" height="1.1" fill="#dfe2ea" opacity="0.6"/><rect x="94.7" y="32.6" width="5.0" height="1.1" fill="#dfe2ea" opacity="0.6"/><rect x="2.1" y="36.3" width="2.2" height="1.1" fill="#dfe2ea" opacity="0.6"/><rect x="7.0" y="36.0" width="5.7" height="1.1" fill="#dfe2ea" opacity="0.6"/><rect x="15.7" y="35.9" width="8.3" height="1.1" fill="#dfe2ea" opacity="0.6"/><rect x="25.6" y="35.7" width="2.4" height="1.1" fill="#dfe2ea" opacity="0.6"/><rect x="30.6" y="35.9" width="10.9" height="1.1" fill="#dfe2ea" opacity="0.6"/><rect x="43.3" y="35.8" width="9.5" height="1.1" fill="#dfe2ea" opacity="0.6"/><rect x="55.6" y="36.1" width="7.7" height="1.1" fill="#dfe2ea" opacity="0.6"/><rect x="65.5" y="35.5" width="5.7" height="1.1" fill="#dfe2ea" opacity="0.6"/><rect x="75.6" y="36.2" width="9.9" height="1.1" fill="#dfe2ea" opacity="0.6"/><rect x="87.6" y="35.8" width="7.6" height="1.1" fill="#dfe2ea" opacity="0.6"/><rect x="97.2" y="36.2" width="2.8" height="1.1" fill="#dfe2ea" opacity="0.6"/><rect x="3.8" y="39.3" width="3.2" height="1.1" fill="#dfe2ea" opacity="0.6"/><rect x="11.2" y="39.0" width="3.8" height="1.1" fill="#dfe2ea" opacity="0.6"/><rect x="19.3" y="39.2" width="4.5" height="1.1" fill="#dfe2ea" opacity="0.6"/><rect x="28.0" y="39.1" width="8.6" height="1.1" fill="#dfe2ea" opacity="0.6"/><rect x="39.1" y="38.8" width="4.2" height="1.1" fill="#dfe2ea" opacity="0.6"/><rect x="46.4" y="39.0" width="3.3" height="1.1" fill="#dfe2ea" opacity="0.6"/><rect x="53.7" y="38.9" width="3.1" height="1.1" fill="#dfe2ea" opacity="0.6"/><rect x="58.5" y="39.0" width="7.7" height="1.1" fill="#dfe2ea" opacity="0.6"/><rect x="68.5" y="39.4" width="6.7" height="1.1" fill="#dfe2ea" opacity="0.6"/><rect x="79.6" y="39.1" width="2.5" height="1.1" fill="#dfe2ea" opacity="0.6"/><rect x="83.7" y="39.3" width="5.2" height="1.1" fill="#dfe2ea" opacity="0.6"/><rect x="91.3" y="39.0" width="5.9" height="1.1" fill="#dfe2ea" opacity="0.6"/><rect x="4.4" y="42.6" width="10.0" height="1.1" fill="#dfe2ea" opacity="0.6"/><rect x="18.6" y="42.2" width="7.8" height="1.1" fill="#dfe2ea" opacity="0.6"/><rect x="28.3" y="42.5" width="10.6" height="1.1" fill="#dfe2ea" opacity="0.6"/><rect x="42.6" y="42.8" width="7.0" height="1.1" fill="#dfe2ea" opacity="0.6"/><rect x="51.7" y="42.3" width="3.4" height="1.1" fill="#dfe2ea" opacity="0.6"/><rect x="58.8" y="42.5" width="7.4" height="1.1" fill="#dfe2ea" opacity="0.6"/><rect x="68.3" y="42.3" width="5.8" height="1.1" fill="#dfe2ea" opacity="0.6"/><rect x="75.9" y="42.7" width="10.6" height="1.1" fill="#dfe2ea" opacity="0.6"/><rect x="90.4" y="42.8" width="5.4" height="1.1" fill="#dfe2ea" opacity="0.6"/><rect x="99.7" y="42.9" width="0.3" height="1.1" fill="#dfe2ea" opacity="0.6"/><rect x="2.2" y="45.5" width="2.9" height="1.1" fill="#dfe2ea" opacity="0.6"/><rect x="8.6" y="45.5" width="3.4" height="1.1" fill="#dfe2ea" opacity="0.6"/><rect x="13.6" y="45.6" width="5.9" height="1.1" fill="#dfe2ea" opacity="0.6"/><rect x="22.8" y="46.0" width="3.6" height="1.1" fill="#dfe2ea" opacity="0.6"/><rect x="29.7" y="46.2" width="5.6" height="1.1" fill="#dfe2ea" opacity="0.6"/><rect x="38.6" y="45.6" width="6.9" height="1.1" fill="#dfe2ea" opacity="0.6"/><rect x="47.9" y="45.7" width="8.5" height="1.1" fill="#dfe2ea" opacity="0.6"/><rect x="58.1" y="45.8" width="5.8" height="1.1" fill="#dfe2ea" opacity="0.6"/><rect x="65.8" y="46.1" width="4.2" height="1.1" fill="#dfe2ea" opacity="0.6"/><rect x="74.0" y="46.0" width="5.9" height="1.1" fill="#dfe2ea" opacity="0.6"/><rect x="83.3" y="45.8" width="3.8" height="1.1" fill="#dfe2ea" opacity="0.6"/><rect x="88.8" y="45.8" width="7.4" height="1.1" fill="#dfe2ea" opacity="0.6"/><rect x="98.0" y="45.6" width="2.0" height="1.1" fill="#dfe2ea" opacity="0.6"/><rect x="5.0" y="48.8" width="9.3" height="1.1" fill="#dfe2ea" opacity="0.6"/><rect x="17.5" y="49.4" width="7.0" height="1.1" fill="#dfe2ea" opacity="0.6"/><rect x="26.8" y="49.0" width="2.9" height="1.1" fill="#dfe2ea" opacity="0.6"/><rect x="32.2" y="49.4" width="9.6" height="1.1" fill="#dfe2ea" opacity="0.6"/><rect x="45.1" y="49.0" width="8.8" height="1.1" fill="#dfe2ea" opacity="0.6"/><rect x="56.2" y="49.2" width="5.9" height="1.1" fill="#dfe2ea" opacity="0.6"/><rect x="64.6" y="49.1" width="9.5" height="1.1" fill="#dfe2ea" opacity="0.6"/><rect x="76.3" y="49.4" width="6.6" height="1.1" fill="#dfe2ea" opacity="0.6"/><rect x="85.5" y="49.1" width="4.8" height="1.1" fill="#dfe2ea" opacity="0.6"/><rect x="94.7" y="49.3" width="5.3" height="1.1" fill="#dfe2ea" opacity="0.6"/><rect x="3.8" y="52.2" width="8.1" height="1.1" fill="#dfe2ea" opacity="0.6"/><rect x="15.0" y="52.7" width="3.4" height="1.1" fill="#dfe2ea" opacity="0.6"/><rect x="21.9" y="52.7" width="7.8" height="1.1" fill="#dfe2ea" opacity="0.6"/><rect x="33.5" y="52.5" width="5.1" height="1.1" fill="#dfe2ea" opacity="0.6"/><rect x="40.5" y="52.3" width="8.2" height="1.1" fill="#dfe2ea" opacity="0.6"/><rect x="51.7" y="52.2" width="9.5" height="1.1" fill="#dfe2ea" opacity="0.6"/><rect x="63.3" y="52.2" width="9.2" height="1.1" fill="#dfe2ea" opacity="0.6"/><rect x="76.7" y="52.1" width="10.4" height="1.1" fill="#dfe2ea" opacity="0.6"/><rect x="90.2" y="52.5" width="9.8" height="1.1" fill="#dfe2ea" opacity="0.6"/><rect x="2.4" y="55.9" width="5.9" height="1.1" fill="#dfe2ea" opacity="0.6"/><rect x="9.8" y="55.5" width="8.4" height="1.1" fill="#dfe2ea" opacity="0.6"/><rect x="20.6" y="55.6" width="9.5" height="1.1" fill="#dfe2ea" opacity="0.6"/><rect x="33.1" y="55.5" width="11.0" height="1.1" fill="#dfe2ea" opacity="0.6"/><rect x="48.5" y="55.8" width="4.8" height="1.1" fill="#dfe2ea" opacity="0.6"/><rect x="55.0" y="55.7" width="10.8" height="1.1" fill="#dfe2ea" opacity="0.6"/><rect x="68.7" y="55.6" width="10.7" height="1.1" fill="#dfe2ea" opacity="0.6"/><rect x="81.0" y="55.3" width="5.0" height="1.1" fill="#dfe2ea" opacity="0.6"/><rect x="87.6" y="55.9" width="9.9" height="1.1" fill="#dfe2ea" opacity="0.6"/><path d="M23.5 58 L24 42 Q25 35 32.5 31.5 L40.5 24.5 L49 44 L56 27 L61.5 29.5 Q66 33 66.5 42 L67 58 Z" fill="#262a3b"/><path d="M41 24.5 L45 22.5 L55 24 L57 27 L52 47 L48 47 Z" fill="#e8e8ec"/><path d="M47.8 27 L51 27 L52.3 45 L49.5 47 L47.8 45 Z" fill="#1b1c26"/><path d="M43.5 10 Q45 4 51.5 4 Q59.5 4.5 60.5 12 L60 21 Q58 28.5 51.5 28.5 Q45.5 28 44 21 Z" fill="#c89c8c"/><path d="M52 12 Q56 11 59.5 13 L59 15 Q56 13.5 52.5 14 Z" fill="#8a6a60" opacity="0.6"/><path d="M40.5 19 Q39 5 48 3.2 Q57.5 1.8 61.5 8.5 L61 12.5 Q56 8.5 49 9.5 Q45.5 10.5 44.5 20 Z" fill="#5a5654"/><ellipse cx="43.8" cy="18" rx="1.6" ry="2.8" fill="#ad8474"/><ellipse cx="76" cy="52" rx="4.5" ry="4.5" fill="#c39484"/><ellipse cx="66" cy="56" rx="3" ry="2.4" fill="#f0f0f0"/><ellipse cx="81" cy="56" rx="3.2" ry="2.6" fill="#2f9a5a"/><ellipse cx="76" cy="57" rx="2.4" ry="2" fill="#e8e8f0"/><ellipse cx="89" cy="55" rx="3.4" ry="2.8" fill="#2848a0"/><ellipse cx="96.5" cy="56.5" rx="3" ry="2.2" fill="#2a3a90"/><rect x="61" y="55" width="5" height="3" fill="#c03040"/><rect x="102" y="0" width="1" height="58" fill="#d8d0c0"/></g></svg><svg class="a" style="left:450px;top:213.6px" width="102.8" height="57.9" viewBox="0 0 102.8 57.9" preserveAspectRatio="none"><defs><filter id="b450213" x="-5%" y="-5%" width="110%" height="110%"><feGaussianBlur stdDeviation="0.4"/></filter></defs><g filter="url(#b450213)"><rect x="0" y="0" width="103" height="58" fill="#ccc8c3"/><rect x="0" y="0" width="14" height="58" fill="#c2beba"/><rect x="0" y="0" width="103" height="5.5" fill="#bdbab6"/><ellipse cx="62" cy="2.6" rx="2.5" ry="1.2" fill="#f4f4f4"/><rect x="31" y="7.6" width="22" height="50.4" fill="#e3e3e6"/><rect x="33.5" y="10" width="5" height="2" fill="#8890a0"/><rect x="35" y="17" width="12" height="2" fill="#8a9ad8"/><rect x="35" y="20" width="10" height="2" fill="#c890a8"/><rect x="35" y="23" width="8" height="2" fill="#a0a8d8"/><circle cx="41" cy="41" r="5.3" fill="none" stroke="#606070" stroke-width="1.6"/><path d="M36 39 L37.5 43" stroke="#3a4ab0" stroke-width="1.4"/><path d="M45.5 39 L44.5 44" stroke="#c03030" stroke-width="1.4"/><rect x="53" y="5.5" width="9" height="52.5" fill="#d2d0ce"/><rect x="61.5" y="6" width="41.5" height="25" fill="#1c1c1e"/><rect x="65" y="8" width="21" height="22" fill="#e4e4e6"/><rect x="91" y="6.5" width="12" height="11" fill="#e8e8ea"/><path d="M53 58 L53 37 Q56 33 62 33 L66 29 L79 16 Q90 10 103 9.5 L103 58 Z" fill="#1e1e20"/><path d="M68 33 Q74 27 82 31 L83 42 L71 45 Z" fill="#22382a"/><path d="M53 41 Q60 39 70 42 L103 52 L103 58 L53 58 Z" fill="#2e2e30"/><rect x="86" y="11" width="12" height="10" fill="#d44a24"/><rect x="88" y="17" width="3" height="3" fill="#f0f0f0"/><path d="M67 46 L80 47 L81 58 L67 58 Z" fill="#e2622a"/><rect x="71" y="50" width="5" height="2.2" fill="#d8e0f0"/></g></svg><svg class="a" style="left:552.8px;top:213.6px" width="100.2" height="57.9" viewBox="0 0 100.2 57.9" preserveAspectRatio="none"><defs><filter id="b552213" x="-5%" y="-5%" width="110%" height="110%"><feGaussianBlur stdDeviation="0.4"/></filter></defs><g filter="url(#b552213)"><rect x="0" y="0" width="100.2" height="58" fill="#ccb3a3"/><rect x="29" y="9" width="40" height="0.7" fill="#b39b8b"/><rect x="29" y="16" width="40" height="0.7" fill="#b39b8b"/><rect x="29" y="23" width="40" height="0.7" fill="#b39b8b"/><rect x="29" y="30" width="40" height="0.7" fill="#b39b8b"/><rect x="29" y="37" width="40" height="0.7" fill="#b39b8b"/><rect x="36" y="4" width="0.6" height="36" fill="#b8a090" opacity="0.6"/><rect x="48" y="4" width="0.6" height="36" fill="#b8a090" opacity="0.6"/><rect x="60" y="4" width="0.6" height="36" fill="#b8a090" opacity="0.6"/><rect x="0" y="0" width="100.2" height="3" fill="#4a3c34"/><ellipse cx="5" cy="2" rx="2" ry="1" fill="#e8e0d8"/><ellipse cx="28" cy="2" rx="2" ry="1" fill="#e8e0d8"/><rect x="0" y="3" width="100.2" height="1" fill="#a89080"/><rect x="0" y="11" width="30" height="29" fill="#604436"/><rect x="0.5" y="19" width="6.5" height="7.5" fill="#3c7a8c"/><rect x="8.5" y="19" width="9" height="7.5" fill="#d6cec2"/><rect x="54.5" y="16" width="9.5" height="30" fill="#846050"/><rect x="56" y="17.5" width="6.5" height="28" fill="#5c3a2a"/><rect x="69" y="0" width="3" height="58" fill="#3a2c28"/><rect x="72" y="0" width="1.6" height="58" fill="#d8d8d8"/><rect x="73.6" y="0" width="12" height="58" fill="#8fa2ae"/><rect x="85.6" y="0" width="1.6" height="58" fill="#4a3a38"/><rect x="87.2" y="0" width="4" height="58" fill="#a8b8c0"/><rect x="91.2" y="0" width="9" height="58" fill="#8e6446"/><rect x="96" y="0" width="1" height="58" fill="#7a5436"/><path d="M0 46 Q8 40 16 42 Q26 36 38 40 Q50 37 58 41 Q64 40 68 44 L70 58 L0 58 Z" fill="#4c4a50"/><path d="M24 58 Q27 46 35 44 Q45 42 54 47 L60 58 Z" fill="#2c2c32"/><path d="M27 36 Q27 28 30 24 Q33 26 33 34 L32 40 Z" fill="#262a3c"/><path d="M62 58 L63 36 Q66 29 71 29.5 Q77 28 83 33 L85 58 Z" fill="#28282e"/><path d="M73 58 L73.5 38 Q77 33 81 35 L82 58 Z" fill="#6a7080"/><circle cx="78" cy="31" r="2.4" fill="#a88a7a"/><circle cx="69" cy="30" r="2.3" fill="#3a3030"/><ellipse cx="7" cy="48.5" rx="3.5" ry="3.5" fill="#caa898"/><ellipse cx="9" cy="56" rx="3.8" ry="3" fill="#d4ae9e"/><ellipse cx="19" cy="39.5" rx="2.6" ry="2.6" fill="#b89a80"/><ellipse cx="11" cy="43" rx="4" ry="1.8" fill="#a0a0a6"/><ellipse cx="30" cy="42.5" rx="4.5" ry="2.6" fill="#3048a8"/><ellipse cx="27" cy="40.5" rx="2.6" ry="1.8" fill="#2a8a4a"/><ellipse cx="20" cy="50" rx="4" ry="4" fill="#8e8e94"/><ellipse cx="45" cy="50" rx="6" ry="4" fill="#6a6a72"/><ellipse cx="36" cy="55" rx="5" ry="3" fill="#7a7a80"/><ellipse cx="52" cy="44" rx="4" ry="3" fill="#4a4a52"/><rect x="0" y="11" width="1.8" height="47" fill="#151515"/></g></svg><svg class="a" style="left:347px;top:271.5px" width="103" height="58" viewBox="0 0 103 58" preserveAspectRatio="none"><defs><filter id="b347271" x="-5%" y="-5%" width="110%" height="110%"><feGaussianBlur stdDeviation="0.35"/></filter></defs><g filter="url(#b347271)"><rect x="0" y="0" width="103" height="58" fill="#c6bca9"/><rect x="78" y="0" width="25" height="58" fill="#c3b9a7"/><path d="M19 56 L22 40 Q26 31 34 29 L46 28 Q52 31 54 38 L55 56 Z" fill="#242222"/><path d="M33 30 Q29 12 37 5 Q45 0 52 5 L53 22 L42 30 Z" fill="#4e3c32"/><ellipse cx="44" cy="14" rx="5" ry="6" fill="#a08070" opacity="0.7"/><path d="M24 56 L27 44 Q31 35 40 33 L46 34 Q49 37 53 34 L60 33 Q70 35 74 44 L77 56 Z" fill="#d63a2e"/><path d="M62 35 Q70 37 73 46 L66 47 Z" fill="#5a6aa0" opacity="0.45"/><ellipse cx="49.5" cy="25.5" rx="8" ry="10.5" fill="#9a7a68"/><path d="M39.5 22 Q38.5 8 49.5 7.5 Q60.5 8 59.8 22 Q58 16 49.5 15.5 Q41 16 39.5 22 Z" fill="#dcd6cc"/><ellipse cx="49.5" cy="13" rx="9.8" ry="5.8" fill="#d6d0c6"/><rect x="44" y="24" width="4" height="1.2" fill="#4a3028"/><rect x="51" y="24" width="4" height="1.2" fill="#4a3028"/><circle cx="52" cy="38" r="1.5" fill="#3a8a4a"/><rect x="29.4" y="43.2" width="36.8" height="11.8" fill="#f4f4f4"/><rect x="31.5" y="45.4" width="32" height="2.2" fill="#3a3a3a" opacity="0.7"/><rect x="33" y="50" width="29" height="2.2" fill="#3a3a3a" opacity="0.7"/><rect x="0" y="0" width="1.8" height="58" fill="#101010"/><rect x="100.6" y="0" width="2.4" height="58" fill="#101010"/><rect x="0" y="55.5" width="103" height="2.5" fill="#101010"/></g></svg><svg class="a" style="left:450px;top:271.5px" width="102.8" height="57.9" viewBox="0 0 102.8 57.9" preserveAspectRatio="none"><defs><filter id="b450271" x="-5%" y="-5%" width="110%" height="110%"><feGaussianBlur stdDeviation="0.4"/></filter></defs><g filter="url(#b450271)"><defs><linearGradient id="sky" x1="0" y1="0" x2="0" y2="1"><stop offset="0" stop-color="#66758c"/><stop offset="0.7" stop-color="#8494aa"/><stop offset="1" stop-color="#a2acba"/></linearGradient></defs><rect x="0" y="0" width="103" height="58" fill="#7c7264"/><rect x="0" y="0" width="103" height="15" fill="url(#sky)"/><ellipse cx="30" cy="5" rx="18" ry="3" fill="#8a9ab0" opacity="0.6"/><ellipse cx="75" cy="4" rx="20" ry="3" fill="#7a8aa2" opacity="0.6"/><rect x="0" y="13.5" width="103" height="1.2" fill="#5a6470"/><path d="M0 15 L103 14 L103 32 L0 33 Z" fill="#a8a6a2"/><rect x="0.0" y="18.0" width="4.2" height="12.0" fill="#b4b2ae"/><rect x="4.2" y="18.0" width="0.6" height="12.0" fill="#8a8a8c"/><rect x="5.7" y="17.6" width="5.3" height="12.4" fill="#bcbcbc"/><rect x="11.0" y="17.6" width="0.7" height="12.4" fill="#8a8a8c"/><rect x="12.5" y="17.2" width="2.9" height="12.8" fill="#b4b2ae"/><rect x="15.3" y="17.2" width="0.8" height="12.8" fill="#8a8a8c"/><rect x="17.2" y="15.7" width="3.4" height="14.3" fill="#a8a8a8"/><rect x="20.7" y="15.7" width="0.7" height="14.3" fill="#8a8a8c"/><rect x="22.7" y="17.5" width="2.5" height="12.5" fill="#bcbcbc"/><rect x="25.2" y="17.5" width="0.7" height="12.5" fill="#8a8a8c"/><rect x="27.4" y="18.1" width="2.0" height="11.9" fill="#bcbcbc"/><rect x="29.4" y="18.1" width="1.3" height="11.9" fill="#8a8a8c"/><rect x="30.7" y="17.2" width="5.4" height="12.8" fill="#bcbcbc"/><rect x="36.0" y="17.2" width="0.7" height="12.8" fill="#8a8a8c"/><rect x="38.3" y="18.9" width="2.7" height="11.1" fill="#a8a8a8"/><rect x="41.0" y="18.9" width="0.8" height="11.1" fill="#8a8a8c"/><rect x="42.3" y="15.6" width="2.6" height="14.4" fill="#c8c8c8"/><rect x="44.9" y="15.6" width="0.9" height="14.4" fill="#8a8a8c"/><rect x="46.9" y="17.4" width="4.1" height="12.6" fill="#d6d6d6"/><rect x="51.0" y="17.4" width="0.7" height="12.6" fill="#8a8a8c"/><rect x="52.3" y="17.8" width="3.1" height="12.2" fill="#bcbcbc"/><rect x="55.4" y="17.8" width="1.0" height="12.2" fill="#8a8a8c"/><rect x="57.2" y="14.9" width="2.2" height="16.1" fill="#c8c8c8"/><rect x="59.4" y="14.9" width="1.4" height="16.1" fill="#8a8a8c"/><rect x="60.8" y="12.3" width="3.4" height="18.7" fill="#a8a8a8"/><rect x="64.2" y="12.3" width="0.9" height="18.7" fill="#8a8a8c"/><rect x="65.9" y="9.3" width="2.0" height="21.7" fill="#bcbcbc"/><rect x="67.9" y="9.3" width="1.1" height="21.7" fill="#8a8a8c"/><rect x="70.1" y="10.5" width="2.4" height="20.5" fill="#a8a8a8"/><rect x="72.5" y="10.5" width="0.9" height="20.5" fill="#8a8a8c"/><rect x="73.9" y="13.7" width="3.8" height="17.3" fill="#c8c8c8"/><rect x="77.7" y="13.7" width="1.1" height="17.3" fill="#8a8a8c"/><rect x="79.7" y="10.8" width="3.3" height="20.2" fill="#a8a8a8"/><rect x="83.0" y="10.8" width="1.4" height="20.2" fill="#8a8a8c"/><rect x="83.9" y="12.7" width="3.2" height="18.3" fill="#bcbcbc"/><rect x="87.1" y="12.7" width="0.9" height="18.3" fill="#8a8a8c"/><rect x="89.3" y="10.9" width="3.9" height="20.1" fill="#d6d6d6"/><rect x="93.2" y="10.9" width="0.8" height="20.1" fill="#8a8a8c"/><rect x="95.2" y="13.3" width="4.2" height="17.7" fill="#d6d6d6"/><rect x="99.4" y="13.3" width="1.4" height="17.7" fill="#8a8a8c"/><path d="M0 29 Q30 27 55 26 L60 31 L0 35 Z" fill="#5e6a52"/><path d="M20 27 L103 44 L103 46 L20 29 Z" fill="#9a9a90"/><path d="M47 25 Q66 23 88 27 L87 35 Q66 33 50 31 Z" fill="#e0e0e0"/><rect x="49.0" y="25.5" width="0.7" height="7" fill="#b0b0b0"/><rect x="54.5" y="25.7" width="0.7" height="7" fill="#b0b0b0"/><rect x="60.0" y="25.9" width="0.7" height="7" fill="#b0b0b0"/><rect x="65.5" y="26.1" width="0.7" height="7" fill="#b0b0b0"/><rect x="71.0" y="26.3" width="0.7" height="7" fill="#b0b0b0"/><rect x="76.5" y="26.5" width="0.7" height="7" fill="#b0b0b0"/><rect x="82.0" y="26.7" width="0.7" height="7" fill="#b0b0b0"/><path d="M0 37 L50 34 L66 58 L0 58 Z" fill="#cd8552"/><path d="M-2 37 L14 58" stroke="#a8663e" stroke-width="0.9"/><path d="M8 37 L24 58" stroke="#a8663e" stroke-width="0.9"/><path d="M18 37 L34 58" stroke="#a8663e" stroke-width="0.9"/><path d="M28 37 L44 58" stroke="#a8663e" stroke-width="0.9"/><path d="M38 37 L54 58" stroke="#a8663e" stroke-width="0.9"/><path d="M48 37 L64 58" stroke="#a8663e" stroke-width="0.9"/><path d="M0 40.5 L54 37.5" stroke="#b06c44" stroke-width="0.8"/><path d="M0 44.5 L57 41.5" stroke="#b06c44" stroke-width="0.8"/><path d="M0 48.5 L60 45.5" stroke="#b06c44" stroke-width="0.8"/><path d="M0 52.5 L63 49.5" stroke="#b06c44" stroke-width="0.8"/><path d="M0 56.5 L66 53.5" stroke="#b06c44" stroke-width="0.8"/><path d="M50 45 L66 43 L68 51 L54 53 Z" fill="#c07a4e"/><ellipse cx="62" cy="41" rx="3" ry="1.6" fill="#e8e8f0"/><ellipse cx="17" cy="36" rx="3" ry="1.8" fill="#f0f0f0"/><ellipse cx="85" cy="50" rx="6" ry="3" fill="#6a6054"/><rect x="0" y="0" width="1.2" height="58" fill="#1a1a1a"/></g></svg><svg class="a" style="left:552.8px;top:271.5px" width="100.2" height="57.5" viewBox="0 0 100.2 57.5" preserveAspectRatio="none"><defs><filter id="b552271" x="-5%" y="-5%" width="110%" height="110%"><feGaussianBlur stdDeviation="0.4"/></filter></defs><g filter="url(#b552271)"><rect x="0" y="0" width="103" height="58" fill="#b1b7c6"/><rect x="3.1" y="2.8" width="6.3" height="1.1" fill="#dfe2ea" opacity="0.6"/><rect x="12.2" y="3.0" width="5.7" height="1.1" fill="#dfe2ea" opacity="0.6"/><rect x="20.2" y="2.5" width="7.7" height="1.1" fill="#dfe2ea" opacity="0.6"/><rect x="30.3" y="2.6" width="5.0" height="1.1" fill="#dfe2ea" opacity="0.6"/><rect x="39.1" y="3.1" width="4.8" height="1.1" fill="#dfe2ea" opacity="0.6"/><rect x="48.2" y="3.2" width="4.3" height="1.1" fill="#dfe2ea" opacity="0.6"/><rect x="56.4" y="2.5" width="8.0" height="1.1" fill="#dfe2ea" opacity="0.6"/><rect x="67.3" y="2.7" width="7.6" height="1.1" fill="#dfe2ea" opacity="0.6"/><rect x="77.1" y="2.7" width="4.8" height="1.1" fill="#dfe2ea" opacity="0.6"/><rect x="85.8" y="2.8" width="5.1" height="1.1" fill="#dfe2ea" opacity="0.6"/><rect x="94.3" y="2.7" width="5.7" height="1.1" fill="#dfe2ea" opacity="0.6"/><rect x="4.9" y="6.4" width="9.5" height="1.1" fill="#dfe2ea" opacity="0.6"/><rect x="17.5" y="5.9" width="4.1" height="1.1" fill="#dfe2ea" opacity="0.6"/><rect x="24.0" y="5.9" width="6.1" height="1.1" fill="#dfe2ea" opacity="0.6"/><rect x="33.8" y="5.8" width="8.6" height="1.1" fill="#dfe2ea" opacity="0.6"/><rect x="46.3" y="6.5" width="6.4" height="1.1" fill="#dfe2ea" opacity="0.6"/><rect x="55.7" y="6.2" width="9.2" height="1.1" fill="#dfe2ea" opacity="0.6"/><rect x="68.2" y="5.8" width="6.5" height="1.1" fill="#dfe2ea" opacity="0.6"/><rect x="76.6" y="6.1" width="4.1" height="1.1" fill="#dfe2ea" opacity="0.6"/><rect x="83.3" y="6.3" width="6.9" height="1.1" fill="#dfe2ea" opacity="0.6"/><rect x="92.9" y="6.2" width="4.9" height="1.1" fill="#dfe2ea" opacity="0.6"/><rect x="4.3" y="9.8" width="7.9" height="1.1" fill="#dfe2ea" opacity="0.6"/><rect x="14.4" y="9.2" width="2.9" height="1.1" fill="#dfe2ea" opacity="0.6"/><rect x="19.2" y="9.6" width="2.1" height="1.1" fill="#dfe2ea" opacity="0.6"/><rect x="25.5" y="9.6" width="3.0" height="1.1" fill="#dfe2ea" opacity="0.6"/><rect x="32.9" y="9.2" width="8.9" height="1.1" fill="#dfe2ea" opacity="0.6"/><rect x="45.2" y="9.2" width="4.3" height="1.1" fill="#dfe2ea" opacity="0.6"/><rect x="51.0" y="9.8" width="6.7" height="1.1" fill="#dfe2ea" opacity="0.6"/><rect x="59.6" y="9.4" width="3.3" height="1.1" fill="#dfe2ea" opacity="0.6"/><rect x="64.5" y="9.7" width="6.2" height="1.1" fill="#dfe2ea" opacity="0.6"/><rect x="73.6" y="9.1" width="2.4" height="1.1" fill="#dfe2ea" opacity="0.6"/><rect x="78.0" y="9.8" width="8.0" height="1.1" fill="#dfe2ea" opacity="0.6"/><rect x="89.0" y="9.3" width="2.9" height="1.1" fill="#dfe2ea" opacity="0.6"/><rect x="94.7" y="9.2" width="3.0" height="1.1" fill="#dfe2ea" opacity="0.6"/><rect x="4.5" y="13.1" width="4.1" height="1.1" fill="#dfe2ea" opacity="0.6"/><rect x="12.8" y="12.6" width="5.9" height="1.1" fill="#dfe2ea" opacity="0.6"/><rect x="20.7" y="13.1" width="8.0" height="1.1" fill="#dfe2ea" opacity="0.6"/><rect x="32.8" y="12.7" width="3.9" height="1.1" fill="#dfe2ea" opacity="0.6"/><rect x="38.3" y="12.6" width="4.7" height="1.1" fill="#dfe2ea" opacity="0.6"/><rect x="44.9" y="13.2" width="2.7" height="1.1" fill="#dfe2ea" opacity="0.6"/><rect x="50.0" y="12.8" width="6.5" height="1.1" fill="#dfe2ea" opacity="0.6"/><rect x="59.4" y="12.8" width="7.3" height="1.1" fill="#dfe2ea" opacity="0.6"/><rect x="69.7" y="12.9" width="2.7" height="1.1" fill="#dfe2ea" opacity="0.6"/><rect x="75.9" y="12.7" width="8.5" height="1.1" fill="#dfe2ea" opacity="0.6"/><rect x="87.3" y="13.0" width="9.3" height="1.1" fill="#dfe2ea" opacity="0.6"/><rect x="98.2" y="12.5" width="1.8" height="1.1" fill="#dfe2ea" opacity="0.6"/><rect x="3.2" y="15.9" width="5.5" height="1.1" fill="#dfe2ea" opacity="0.6"/><rect x="11.6" y="16.2" width="8.5" height="1.1" fill="#dfe2ea" opacity="0.6"/><rect x="22.2" y="16.2" width="5.6" height="1.1" fill="#dfe2ea" opacity="0.6"/><rect x="29.4" y="15.7" width="10.1" height="1.1" fill="#dfe2ea" opacity="0.6"/><rect x="42.9" y="16.5" width="3.3" height="1.1" fill="#dfe2ea" opacity="0.6"/><rect x="49.8" y="16.1" width="4.0" height="1.1" fill="#dfe2ea" opacity="0.6"/><rect x="57.9" y="16.2" width="9.7" height="1.1" fill="#dfe2ea" opacity="0.6"/><rect x="71.0" y="16.4" width="8.7" height="1.1" fill="#dfe2ea" opacity="0.6"/><rect x="82.7" y="16.3" width="7.5" height="1.1" fill="#dfe2ea" opacity="0.6"/><rect x="93.3" y="16.2" width="4.0" height="1.1" fill="#dfe2ea" opacity="0.6"/><rect x="99.8" y="16.3" width="0.2" height="1.1" fill="#dfe2ea" opacity="0.6"/><rect x="2.3" y="19.7" width="2.2" height="1.1" fill="#dfe2ea" opacity="0.6"/><rect x="8.2" y="19.7" width="11.0" height="1.1" fill="#dfe2ea" opacity="0.6"/><rect x="23.6" y="19.1" width="3.4" height="1.1" fill="#dfe2ea" opacity="0.6"/><rect x="30.3" y="19.1" width="8.8" height="1.1" fill="#dfe2ea" opacity="0.6"/><rect x="43.5" y="19.2" width="4.1" height="1.1" fill="#dfe2ea" opacity="0.6"/><rect x="50.3" y="19.1" width="3.6" height="1.1" fill="#dfe2ea" opacity="0.6"/><rect x="55.7" y="19.1" width="2.3" height="1.1" fill="#dfe2ea" opacity="0.6"/><rect x="61.5" y="19.6" width="9.0" height="1.1" fill="#dfe2ea" opacity="0.6"/><rect x="73.3" y="19.1" width="8.8" height="1.1" fill="#dfe2ea" opacity="0.6"/><rect x="86.2" y="19.1" width="5.7" height="1.1" fill="#dfe2ea" opacity="0.6"/><rect x="94.5" y="19.6" width="3.7" height="1.1" fill="#dfe2ea" opacity="0.6"/><rect x="2.1" y="22.4" width="3.7" height="1.1" fill="#dfe2ea" opacity="0.6"/><rect x="10.1" y="22.9" width="5.7" height="1.1" fill="#dfe2ea" opacity="0.6"/><rect x="19.1" y="22.9" width="5.7" height="1.1" fill="#dfe2ea" opacity="0.6"/><rect x="28.0" y="23.1" width="2.4" height="1.1" fill="#dfe2ea" opacity="0.6"/><rect x="32.9" y="22.6" width="7.9" height="1.1" fill="#dfe2ea" opacity="0.6"/><rect x="45.2" y="22.3" width="3.5" height="1.1" fill="#dfe2ea" opacity="0.6"/><rect x="50.3" y="23.0" width="5.6" height="1.1" fill="#dfe2ea" opacity="0.6"/><rect x="58.8" y="22.4" width="10.4" height="1.1" fill="#dfe2ea" opacity="0.6"/><rect x="73.5" y="23.0" width="3.5" height="1.1" fill="#dfe2ea" opacity="0.6"/><rect x="79.1" y="22.8" width="7.2" height="1.1" fill="#dfe2ea" opacity="0.6"/><rect x="90.8" y="23.0" width="5.7" height="1.1" fill="#dfe2ea" opacity="0.6"/><rect x="98.1" y="22.7" width="1.9" height="1.1" fill="#dfe2ea" opacity="0.6"/><rect x="4.9" y="26.1" width="4.8" height="1.1" fill="#dfe2ea" opacity="0.6"/><rect x="13.0" y="25.7" width="4.7" height="1.1" fill="#dfe2ea" opacity="0.6"/><rect x="20.5" y="26.1" width="4.5" height="1.1" fill="#dfe2ea" opacity="0.6"/><rect x="27.8" y="26.2" width="2.7" height="1.1" fill="#dfe2ea" opacity="0.6"/><rect x="34.8" y="25.8" width="7.6" height="1.1" fill="#dfe2ea" opacity="0.6"/><rect x="44.7" y="26.0" width="10.6" height="1.1" fill="#dfe2ea" opacity="0.6"/><rect x="59.0" y="26.3" width="2.7" height="1.1" fill="#dfe2ea" opacity="0.6"/><rect x="65.9" y="25.8" width="4.3" height="1.1" fill="#dfe2ea" opacity="0.6"/><rect x="73.7" y="26.2" width="10.6" height="1.1" fill="#dfe2ea" opacity="0.6"/><rect x="85.8" y="26.3" width="3.0" height="1.1" fill="#dfe2ea" opacity="0.6"/><rect x="91.6" y="26.0" width="8.4" height="1.1" fill="#dfe2ea" opacity="0.6"/><rect x="2.7" y="29.3" width="10.7" height="1.1" fill="#dfe2ea" opacity="0.6"/><rect x="14.8" y="29.0" width="3.8" height="1.1" fill="#dfe2ea" opacity="0.6"/><rect x="21.4" y="29.7" width="10.6" height="1.1" fill="#dfe2ea" opacity="0.6"/><rect x="36.3" y="29.5" width="5.7" height="1.1" fill="#dfe2ea" opacity="0.6"/><rect x="45.7" y="29.7" width="9.5" height="1.1" fill="#dfe2ea" opacity="0.6"/><rect x="59.2" y="29.2" width="8.9" height="1.1" fill="#dfe2ea" opacity="0.6"/><rect x="70.1" y="29.1" width="5.8" height="1.1" fill="#dfe2ea" opacity="0.6"/><rect x="79.6" y="29.1" width="3.4" height="1.1" fill="#dfe2ea" opacity="0.6"/><rect x="86.7" y="29.0" width="2.4" height="1.1" fill="#dfe2ea" opacity="0.6"/><rect x="90.6" y="29.0" width="2.2" height="1.1" fill="#dfe2ea" opacity="0.6"/><rect x="96.4" y="29.0" width="3.6" height="1.1" fill="#dfe2ea" opacity="0.6"/><rect x="3.1" y="32.3" width="2.0" height="1.1" fill="#dfe2ea" opacity="0.6"/><rect x="7.4" y="32.3" width="5.8" height="1.1" fill="#dfe2ea" opacity="0.6"/><rect x="15.9" y="32.9" width="6.4" height="1.1" fill="#dfe2ea" opacity="0.6"/><rect x="25.6" y="32.4" width="4.7" height="1.1" fill="#dfe2ea" opacity="0.6"/><rect x="32.4" y="33.0" width="5.5" height="1.1" fill="#dfe2ea" opacity="0.6"/><rect x="42.3" y="32.7" width="3.3" height="1.1" fill="#dfe2ea" opacity="0.6"/><rect x="49.4" y="32.8" width="10.3" height="1.1" fill="#dfe2ea" opacity="0.6"/><rect x="63.1" y="32.4" width="2.8" height="1.1" fill="#dfe2ea" opacity="0.6"/><rect x="70.3" y="32.9" width="10.2" height="1.1" fill="#dfe2ea" opacity="0.6"/><rect x="83.0" y="32.8" width="9.0" height="1.1" fill="#dfe2ea" opacity="0.6"/><rect x="94.7" y="32.6" width="5.0" height="1.1" fill="#dfe2ea" opacity="0.6"/><rect x="2.1" y="36.3" width="2.2" height="1.1" fill="#dfe2ea" opacity="0.6"/><rect x="7.0" y="36.0" width="5.7" height="1.1" fill="#dfe2ea" opacity="0.6"/><rect x="15.7" y="35.9" width="8.3" height="1.1" fill="#dfe2ea" opacity="0.6"/><rect x="25.6" y="35.7" width="2.4" height="1.1" fill="#dfe2ea" opacity="0.6"/><rect x="30.6" y="35.9" width="10.9" height="1.1" fill="#dfe2ea" opacity="0.6"/><rect x="43.3" y="35.8" width="9.5" height="1.1" fill="#dfe2ea" opacity="0.6"/><rect x="55.6" y="36.1" width="7.7" height="1.1" fill="#dfe2ea" opacity="0.6"/><rect x="65.5" y="35.5" width="5.7" height="1.1" fill="#dfe2ea" opacity="0.6"/><rect x="75.6" y="36.2" width="9.9" height="1.1" fill="#dfe2ea" opacity="0.6"/><rect x="87.6" y="35.8" width="7.6" height="1.1" fill="#dfe2ea" opacity="0.6"/><rect x="97.2" y="36.2" width="2.8" height="1.1" fill="#dfe2ea" opacity="0.6"/><rect x="3.8" y="39.3" width="3.2" height="1.1" fill="#dfe2ea" opacity="0.6"/><rect x="11.2" y="39.0" width="3.8" height="1.1" fill="#dfe2ea" opacity="0.6"/><rect x="19.3" y="39.2" width="4.5" height="1.1" fill="#dfe2ea" opacity="0.6"/><rect x="28.0" y="39.1" width="8.6" height="1.1" fill="#dfe2ea" opacity="0.6"/><rect x="39.1" y="38.8" width="4.2" height="1.1" fill="#dfe2ea" opacity="0.6"/><rect x="46.4" y="39.0" width="3.3" height="1.1" fill="#dfe2ea" opacity="0.6"/><rect x="53.7" y="38.9" width="3.1" height="1.1" fill="#dfe2ea" opacity="0.6"/><rect x="58.5" y="39.0" width="7.7" height="1.1" fill="#dfe2ea" opacity="0.6"/><rect x="68.5" y="39.4" width="6.7" height="1.1" fill="#dfe2ea" opacity="0.6"/><rect x="79.6" y="39.1" width="2.5" height="1.1" fill="#dfe2ea" opacity="0.6"/><rect x="83.7" y="39.3" width="5.2" height="1.1" fill="#dfe2ea" opacity="0.6"/><rect x="91.3" y="39.0" width="5.9" height="1.1" fill="#dfe2ea" opacity="0.6"/><rect x="4.4" y="42.6" width="10.0" height="1.1" fill="#dfe2ea" opacity="0.6"/><rect x="18.6" y="42.2" width="7.8" height="1.1" fill="#dfe2ea" opacity="0.6"/><rect x="28.3" y="42.5" width="10.6" height="1.1" fill="#dfe2ea" opacity="0.6"/><rect x="42.6" y="42.8" width="7.0" height="1.1" fill="#dfe2ea" opacity="0.6"/><rect x="51.7" y="42.3" width="3.4" height="1.1" fill="#dfe2ea" opacity="0.6"/><rect x="58.8" y="42.5" width="7.4" height="1.1" fill="#dfe2ea" opacity="0.6"/><rect x="68.3" y="42.3" width="5.8" height="1.1" fill="#dfe2ea" opacity="0.6"/><rect x="75.9" y="42.7" width="10.6" height="1.1" fill="#dfe2ea" opacity="0.6"/><rect x="90.4" y="42.8" width="5.4" height="1.1" fill="#dfe2ea" opacity="0.6"/><rect x="99.7" y="42.9" width="0.3" height="1.1" fill="#dfe2ea" opacity="0.6"/><rect x="2.2" y="45.5" width="2.9" height="1.1" fill="#dfe2ea" opacity="0.6"/><rect x="8.6" y="45.5" width="3.4" height="1.1" fill="#dfe2ea" opacity="0.6"/><rect x="13.6" y="45.6" width="5.9" height="1.1" fill="#dfe2ea" opacity="0.6"/><rect x="22.8" y="46.0" width="3.6" height="1.1" fill="#dfe2ea" opacity="0.6"/><rect x="29.7" y="46.2" width="5.6" height="1.1" fill="#dfe2ea" opacity="0.6"/><rect x="38.6" y="45.6" width="6.9" height="1.1" fill="#dfe2ea" opacity="0.6"/><rect x="47.9" y="45.7" width="8.5" height="1.1" fill="#dfe2ea" opacity="0.6"/><rect x="58.1" y="45.8" width="5.8" height="1.1" fill="#dfe2ea" opacity="0.6"/><rect x="65.8" y="46.1" width="4.2" height="1.1" fill="#dfe2ea" opacity="0.6"/><rect x="74.0" y="46.0" width="5.9" height="1.1" fill="#dfe2ea" opacity="0.6"/><rect x="83.3" y="45.8" width="3.8" height="1.1" fill="#dfe2ea" opacity="0.6"/><rect x="88.8" y="45.8" width="7.4" height="1.1" fill="#dfe2ea" opacity="0.6"/><rect x="98.0" y="45.6" width="2.0" height="1.1" fill="#dfe2ea" opacity="0.6"/><rect x="5.0" y="48.8" width="9.3" height="1.1" fill="#dfe2ea" opacity="0.6"/><rect x="17.5" y="49.4" width="7.0" height="1.1" fill="#dfe2ea" opacity="0.6"/><rect x="26.8" y="49.0" width="2.9" height="1.1" fill="#dfe2ea" opacity="0.6"/><rect x="32.2" y="49.4" width="9.6" height="1.1" fill="#dfe2ea" opacity="0.6"/><rect x="45.1" y="49.0" width="8.8" height="1.1" fill="#dfe2ea" opacity="0.6"/><rect x="56.2" y="49.2" width="5.9" height="1.1" fill="#dfe2ea" opacity="0.6"/><rect x="64.6" y="49.1" width="9.5" height="1.1" fill="#dfe2ea" opacity="0.6"/><rect x="76.3" y="49.4" width="6.6" height="1.1" fill="#dfe2ea" opacity="0.6"/><rect x="85.5" y="49.1" width="4.8" height="1.1" fill="#dfe2ea" opacity="0.6"/><rect x="94.7" y="49.3" width="5.3" height="1.1" fill="#dfe2ea" opacity="0.6"/><rect x="3.8" y="52.2" width="8.1" height="1.1" fill="#dfe2ea" opacity="0.6"/><rect x="15.0" y="52.7" width="3.4" height="1.1" fill="#dfe2ea" opacity="0.6"/><rect x="21.9" y="52.7" width="7.8" height="1.1" fill="#dfe2ea" opacity="0.6"/><rect x="33.5" y="52.5" width="5.1" height="1.1" fill="#dfe2ea" opacity="0.6"/><rect x="40.5" y="52.3" width="8.2" height="1.1" fill="#dfe2ea" opacity="0.6"/><rect x="51.7" y="52.2" width="9.5" height="1.1" fill="#dfe2ea" opacity="0.6"/><rect x="63.3" y="52.2" width="9.2" height="1.1" fill="#dfe2ea" opacity="0.6"/><rect x="76.7" y="52.1" width="10.4" height="1.1" fill="#dfe2ea" opacity="0.6"/><rect x="90.2" y="52.5" width="9.8" height="1.1" fill="#dfe2ea" opacity="0.6"/><rect x="2.4" y="55.9" width="5.9" height="1.1" fill="#dfe2ea" opacity="0.6"/><rect x="9.8" y="55.5" width="8.4" height="1.1" fill="#dfe2ea" opacity="0.6"/><rect x="20.6" y="55.6" width="9.5" height="1.1" fill="#dfe2ea" opacity="0.6"/><rect x="33.1" y="55.5" width="11.0" height="1.1" fill="#dfe2ea" opacity="0.6"/><rect x="48.5" y="55.8" width="4.8" height="1.1" fill="#dfe2ea" opacity="0.6"/><rect x="55.0" y="55.7" width="10.8" height="1.1" fill="#dfe2ea" opacity="0.6"/><rect x="68.7" y="55.6" width="10.7" height="1.1" fill="#dfe2ea" opacity="0.6"/><rect x="81.0" y="55.3" width="5.0" height="1.1" fill="#dfe2ea" opacity="0.6"/><rect x="87.6" y="55.9" width="9.9" height="1.1" fill="#dfe2ea" opacity="0.6"/><path d="M23.5 58 L24 42 Q25 35 32.5 31.5 L40.5 24.5 L49 44 L56 27 L61.5 29.5 Q66 33 66.5 42 L67 58 Z" fill="#262a3b"/><path d="M41 24.5 L45 22.5 L55 24 L57 27 L52 47 L48 47 Z" fill="#e8e8ec"/><path d="M47.8 27 L51 27 L52.3 45 L49.5 47 L47.8 45 Z" fill="#1b1c26"/><path d="M43.5 10 Q45 4 51.5 4 Q59.5 4.5 60.5 12 L60 21 Q58 28.5 51.5 28.5 Q45.5 28 44 21 Z" fill="#c89c8c"/><path d="M52 12 Q56 11 59.5 13 L59 15 Q56 13.5 52.5 14 Z" fill="#8a6a60" opacity="0.6"/><path d="M40.5 19 Q39 5 48 3.2 Q57.5 1.8 61.5 8.5 L61 12.5 Q56 8.5 49 9.5 Q45.5 10.5 44.5 20 Z" fill="#5a5654"/><ellipse cx="43.8" cy="18" rx="1.6" ry="2.8" fill="#ad8474"/><ellipse cx="76" cy="52" rx="4.5" ry="4.5" fill="#c39484"/><ellipse cx="66" cy="56" rx="3" ry="2.4" fill="#f0f0f0"/><ellipse cx="81" cy="56" rx="3.2" ry="2.6" fill="#2f9a5a"/><ellipse cx="76" cy="57" rx="2.4" ry="2" fill="#e8e8f0"/><ellipse cx="89" cy="55" rx="3.4" ry="2.8" fill="#2848a0"/><ellipse cx="96.5" cy="56.5" rx="3" ry="2.2" fill="#2a3a90"/><rect x="61" y="55" width="5" height="3" fill="#c03040"/><rect x="40" y="40" width="28" height="11" rx="2" fill="#2a2d3a" opacity="0.35"/><rect x="41" y="45" width="26" height="1.7" fill="#ececec"/><rect x="65" y="42.5" width="1.8" height="6" fill="#f0f0f0"/><circle cx="80.5" cy="45.8" r="3.6" fill="#f4f4f4"/><circle cx="80.5" cy="45.8" r="1.3" fill="#9aa0b0"/><circle cx="93.5" cy="45.8" r="3" fill="none" stroke="#f4f4f4" stroke-width="1.3"/><rect x="0" y="0" width="1.8" height="58" fill="#9a8a70"/></g></svg><div class="a" style="left:346.9px;top:356.3px;width:320px;height:12.5px;background:#d9d9d9;"></div><div class="t" style="left:352.6px;top:360.7px;font-size:5.2px;color:#1e2640;--w:29.4;transform:scaleX(1.040);transform-origin:0 0;-webkit-text-stroke:0.12px #1e2640">Notifications</div><div class="a" style="left:346.9px;top:369px;width:302px;height:121px;background:#fff;"></div><div class="a" style="left:649px;top:369px;width:4.5px;height:121px;background:#f1f1f1;"></div><div class="a" style="left:649.5px;top:376px;width:4px;height:11px;background:#c6c6c6;"></div><div class="a" style="left:346.9px;top:384.5px;width:302px;height:1.5px;background:#a4a4a4;"></div><div class="a" style="left:346.9px;top:400.7px;width:302px;height:1.5px;background:#a4a4a4;"></div><div class="a" style="left:346.9px;top:417.1px;width:302px;height:1.5px;background:#a4a4a4;"></div><div class="a" style="left:346.9px;top:434.2px;width:302px;height:1.5px;background:#a4a4a4;"></div><div class="a" style="left:346.9px;top:450.2px;width:302px;height:1.5px;background:#a4a4a4;"></div><div class="a" style="left:346.9px;top:466.5px;width:302px;height:1.5px;background:#a4a4a4;"></div><div class="a" style="left:346.9px;top:489.1px;width:302px;height:1.5px;background:#a4a4a4;"></div><div class="t" style="left:353.3px;top:375.09999999999997px;font-size:4.2px;color:#a89c9c;--w:17;transform:scaleX(0.862);transform-origin:0 0;">11 m ago -</div><div class="t" style="left:372.6px;top:374.79999999999995px;font-size:4.7px;color:#1f2846;--w:120.4;transform:scaleX(0.832);transform-origin:0 0;">We are having issues on AFPTV Live, and working on resolving them.</div><div class="t" style="left:353.3px;top:391.9px;font-size:4.2px;color:#a89c9c;--w:17;transform:scaleX(0.849);transform-origin:0 0;">16 m ago -</div><svg class="a" style="left:372.7px;top:391.4px" width="5" height="5" viewBox="0 0 5 5"><circle cx="2.5" cy="2.5" r="1.7" fill="none" stroke="#333" stroke-width="0.65"/><path d="M2.5 1.5v1.1h0.8" stroke="#333" stroke-width="0.4" fill="none"/></svg><div class="t" style="left:379px;top:391.59999999999997px;font-size:4.7px;color:#1f2846;--w:243.9;transform:scaleX(0.826);transform-origin:0 0;"><span style="-webkit-text-stroke:0.08px #1f2846">NEW TIME: LOGNES</span> <span style="font-size:3px">&#9632;&#9632;</span> - Interior Minister Bruno Retailleau and Budget Minister Amelie de Montchalin visit: Arrival (IP5) - 09:30 GMT - COE68</div><div class="t" style="left:353.3px;top:408.4px;font-size:4.2px;color:#a89c9c;--w:17;transform:scaleX(0.849);transform-origin:0 0;">24 m ago -</div><svg class="a" style="left:372.9px;top:407.9px" width="5" height="5" viewBox="0 0 5 5"><circle cx="2.5" cy="2.5" r="1.55" fill="#f2c200"/></svg><div class="t" style="left:379px;top:408.09999999999997px;font-size:4.7px;color:#1f2846;--w:193.7;transform:scaleX(0.816);transform-origin:0 0;"><span style="-webkit-text-stroke:0.08px #1f2846">NEW OFFER: 09:20 GMT - JABALIA</span> <span style="font-size:3px">&#9632;&#9632;</span> - View of tents area for returnees to the northern Gaza Strip (IP5) - COE66</div><div class="t" style="left:353.3px;top:424.2px;font-size:4.2px;color:#a89c9c;--w:17;transform:scaleX(0.849);transform-origin:0 0;">27 m ago -</div><svg class="a" style="left:372.9px;top:423.7px" width="5" height="5" viewBox="0 0 5 5"><circle cx="2.5" cy="2.5" r="1.55" fill="#f2c200"/></svg><div class="t" style="left:379px;top:423.9px;font-size:4.7px;color:#1f2846;--w:237.8;transform:scaleX(0.824);transform-origin:0 0;"><span style="-webkit-text-stroke:0.08px #1f2846">NEW OFFER: 10:30 GMT - LOGNES</span> <span style="font-size:3px">&#9632;&#9632;</span> - Interior Minister Bruno Retailleau and Budget Minister Amelie de Montchalin visit: Arrival - COE68</div><div class="t" style="left:355.8px;top:440.40000000000003px;font-size:4.2px;color:#a89c9c;--w:14.5;transform:scaleX(0.877);transform-origin:0 0;">1 h ago -</div><svg class="a" style="left:372.7px;top:439.90000000000003px" width="5" height="5" viewBox="0 0 5 5"><circle cx="2.5" cy="2.5" r="1.7" fill="none" stroke="#333" stroke-width="0.65"/><path d="M2.5 1.5v1.1h0.8" stroke="#333" stroke-width="0.4" fill="none"/></svg><div class="t" style="left:379px;top:440.1px;font-size:4.7px;color:#1f2846;--w:248.8;transform:scaleX(0.803);transform-origin:0 0;"><span style="-webkit-text-stroke:0.08px #1f2846">NEW TIME: MOSCOW</span> <span style="font-size:3px">&#9632;&#9632;</span> - Presser by the UN nuclear chief Rafael Grossi and Rosatom CEO Alexey Likhachev - TBA AROUND 09:00 GMT - COE64</div><div class="t" style="left:355.8px;top:456.8px;font-size:4.2px;color:#a89c9c;--w:14.5;transform:scaleX(0.877);transform-origin:0 0;">1 h ago -</div><svg class="a" style="left:372.9px;top:456.3px" width="5" height="5" viewBox="0 0 5 5"><circle cx="2.5" cy="2.5" r="1.55" fill="#f2c200"/></svg><div class="t" style="left:379px;top:456.5px;font-size:4.7px;color:#1f2846;--w:143.9;transform:scaleX(0.786);transform-origin:0 0;"><span style="-webkit-text-stroke:0.08px #1f2846">NEW OFFER: 08:00 GMT - AL-ZAWAYDA</span> <span style="font-size:3px">&#9632;&#9632;</span> - View of the Gaza coastline (IP5) - COE66</div><div class="t" style="left:355.8px;top:472.8px;font-size:4.2px;color:#a89c9c;--w:14.5;transform:scaleX(0.877);transform-origin:0 0;">2 h ago -</div><svg class="a" style="left:372.9px;top:472.3px" width="5" height="5" viewBox="0 0 5 5"><circle cx="2.5" cy="2.5" r="1.55" fill="#f2c200"/></svg><div class="t" style="left:379px;top:472.5px;font-size:4.7px;color:#1f2846;--w:246.4;transform:scaleX(0.824);transform-origin:0 0;"><span style="-webkit-text-stroke:0.08px #1f2846">NEW OFFER: 08:30 GMT - BAABDA</span> <span style="font-size:3px">&#9632;&#9632;</span> - US deputy envoy's Morgan Ortagus holds presser after meeting with Lebanese president Joseph Aoun</div><div class="t" style="left:372.6px;top:479.09999999999997px;font-size:4.7px;color:#1f2846;--w:38.4;transform:scaleX(0.784);transform-origin:0 0;">(Curated, IP5) - COE64</div><svg class="a" style="left:211.5px;top:168px" width="8" height="10" viewBox="0 0 8 10"><path d="M1 0.8L1 7.6 2.8 6 4.2 9 5.5 8.4 4.2 5.5 6.6 5.5z" fill="#e8e8e8" stroke="#5a5a5a" stroke-width="0.9" stroke-linejoin="round"/></svg></div></div>
</div>
</body></html>
